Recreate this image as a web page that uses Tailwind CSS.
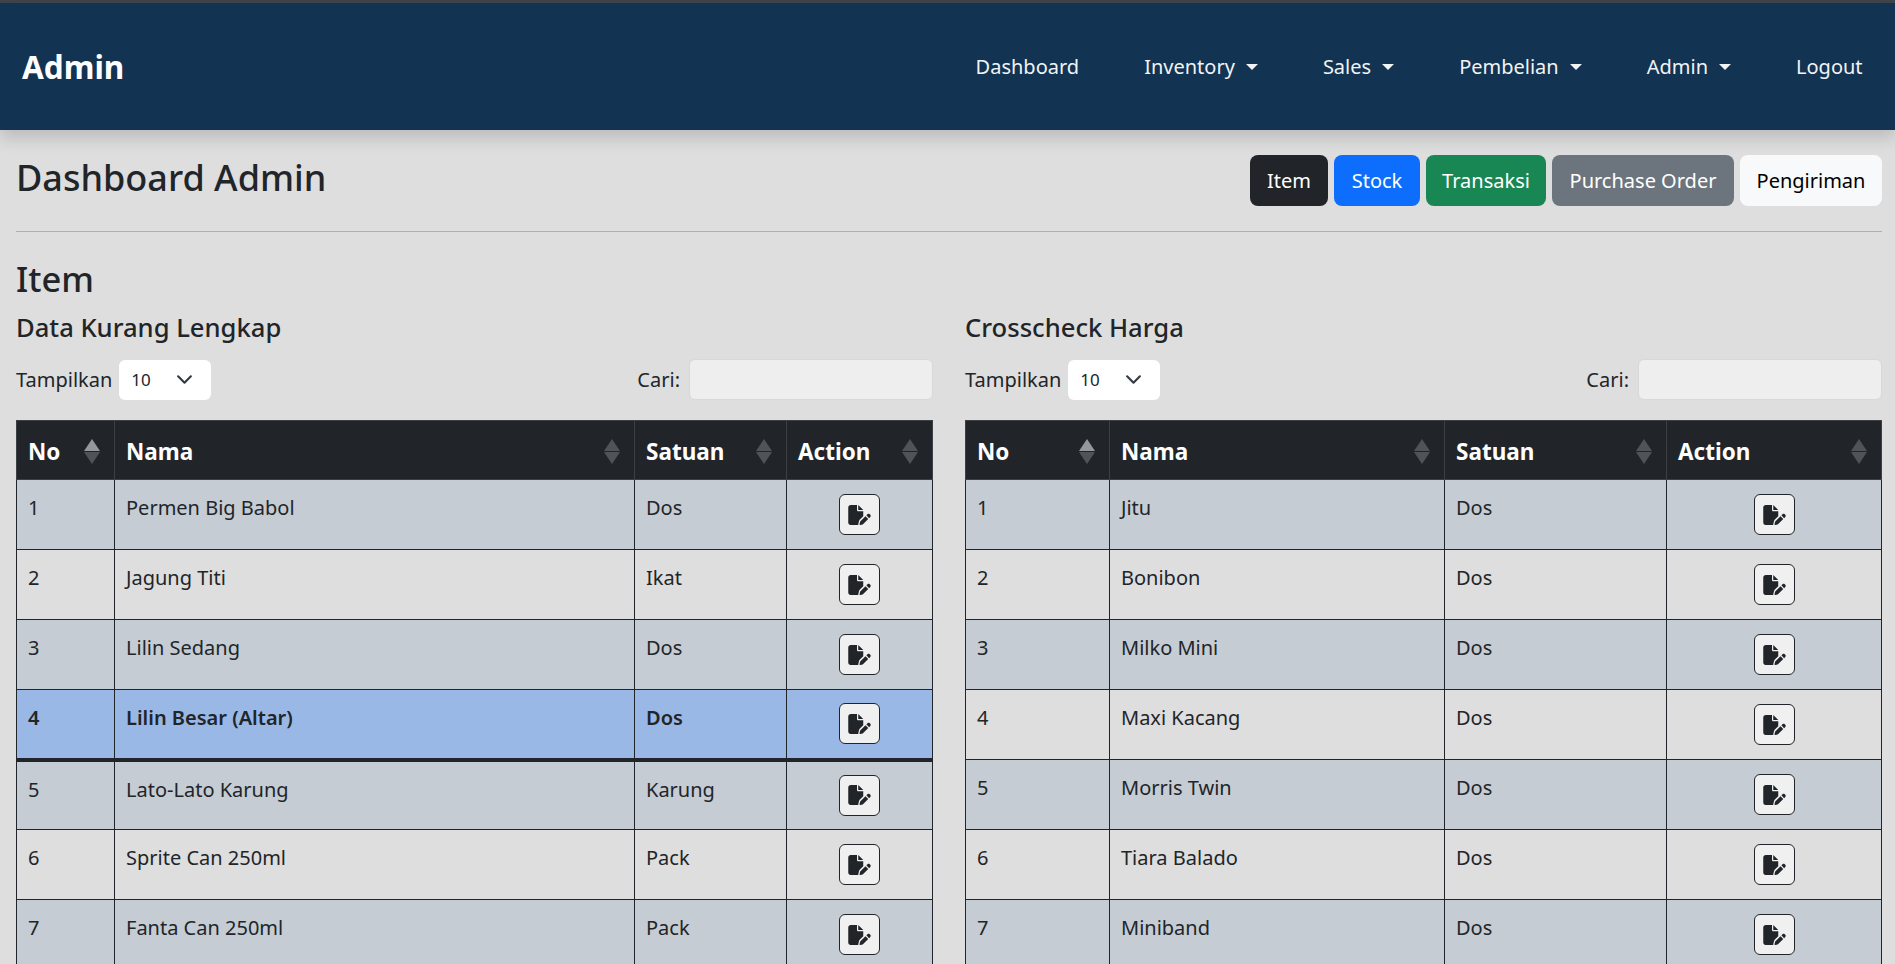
<!DOCTYPE html>
<html lang="en">
<head>
    <meta charset="UTF-8">
    <title>Dashboard Admin</title>
    <script src="https://cdn.jsdelivr.net/npm/@tailwindcss/browser@4"></script>
</head>
<body class="h-screen overflow-hidden bg-[#dedede] text-[#212529] font-['Noto_Sans',sans-serif] text-[20px]">
    <div class="h-[3px] bg-[#3f454b]"></div>
    <!-- Navbar -->
    <nav class="relative z-10 h-[127px] bg-[#123352] text-[#f1f3f5] flex items-center justify-between pl-[22px] pr-[29px] shadow-[0_8px_16px_rgba(0,0,0,0.16)]">
        <a class="text-[31.5px] font-bold text-white">Admin</a>
        <div class="flex items-center gap-[65px]">
            <a>Dashboard</a>
            <a class="flex items-center gap-[11px]">Inventory <i class="w-0 h-0 border-x-[6px] border-x-transparent border-t-[6px] border-t-[#f1f3f5]"></i></a>
            <a class="flex items-center gap-[11px]">Sales <i class="w-0 h-0 border-x-[6px] border-x-transparent border-t-[6px] border-t-[#f1f3f5]"></i></a>
            <a class="flex items-center gap-[11px]">Pembelian <i class="w-0 h-0 border-x-[6px] border-x-transparent border-t-[6px] border-t-[#f1f3f5]"></i></a>
            <a class="flex items-center gap-[11px]">Admin <i class="w-0 h-0 border-x-[6px] border-x-transparent border-t-[6px] border-t-[#f1f3f5]"></i></a>
            <a class="w-[70px]">Logout</a>
        </div>
    </nav>

    <main class="pl-4 pr-[13px]">
        <div class="flex justify-between items-start pt-[24px]">
            <h1 class="text-[36px] leading-[48px] font-medium">Dashboard Admin</h1>
            <div class="flex gap-[6px] mt-[1px]">
                <button class="h-[51px] w-[78px] rounded-[8px] bg-[#212529] text-white">Item</button>
                <button class="h-[51px] w-[86px] rounded-[8px] bg-[#0d6efd] text-white">Stock</button>
                <button class="h-[51px] w-[120px] rounded-[8px] bg-[#198754] text-white">Transaksi</button>
                <button class="h-[51px] w-[182px] rounded-[8px] bg-[#6c757d] text-white">Purchase Order</button>
                <button class="h-[51px] w-[142px] rounded-[8px] bg-[#f8f9fa] text-black">Pengiriman</button>
            </div>
        </div>
        <hr class="mt-[25px] border-[#b0b0b0]">
        <h3 class="mt-[26px] text-[34.5px] leading-[42px] font-medium">Item</h3>

        <div class="grid grid-cols-2 gap-[32px] mt-[13px]">
            <!-- Data Kurang Lengkap -->
            <section>
                <h4 class="text-[25.6px] leading-[30px] font-medium">Data Kurang Lengkap</h4>
                <div class="flex justify-between mt-[16px] h-[41px] items-center">
                    <div class="flex items-center gap-[7px]">Tampilkan
                        <div class="w-[92px] h-[40px] rounded-[6px] bg-white flex items-center justify-between pl-[12px] pr-[18px] text-[17px]">10
                            <svg class="w-[17px] h-[17px]" viewBox="0 0 16 16" fill="none" stroke="#343a40" stroke-width="2" stroke-linecap="round" stroke-linejoin="round"><path d="M2 5l6 6 6-6"/></svg>
                        </div>
                    </div>
                    <div class="flex items-center gap-[9px]">Cari:
                        <div class="w-[244px] h-[41px] rounded-[6px] bg-[#eeeeee] border border-[#d8d8d8]"></div>
                    </div>
                </div>
                <table class="mt-[20px] w-full table-fixed border-collapse" id="tableKurang">
                    <colgroup><col class="w-[98px]"><col class="w-[520px]"><col class="w-[152px]"><col></colgroup>
                </table>
            </section>

            <!-- Crosscheck Harga -->
            <section>
                <h4 class="text-[25.6px] leading-[30px] font-medium">Crosscheck Harga</h4>
                <div class="flex justify-between mt-[16px] h-[41px] items-center">
                    <div class="flex items-center gap-[7px]">Tampilkan
                        <div class="w-[92px] h-[40px] rounded-[6px] bg-white flex items-center justify-between pl-[12px] pr-[18px] text-[17px]">10
                            <svg class="w-[17px] h-[17px]" viewBox="0 0 16 16" fill="none" stroke="#343a40" stroke-width="2" stroke-linecap="round" stroke-linejoin="round"><path d="M2 5l6 6 6-6"/></svg>
                        </div>
                    </div>
                    <div class="flex items-center gap-[9px]">Cari:
                        <div class="w-[244px] h-[41px] rounded-[6px] bg-[#eeeeee] border border-[#d8d8d8]"></div>
                    </div>
                </div>
                <table class="mt-[20px] w-full table-fixed border-collapse" id="tableHarga">
                    <colgroup><col class="w-[144px]"><col class="w-[335px]"><col class="w-[222px]"><col></colgroup>
                </table>
            </section>
        </div>
    </main>

    <script>
        const kurang = [
            ["Permen Big Babol", "Dos"], ["Jagung Titi", "Ikat"], ["Lilin Sedang", "Dos"], ["Lilin Besar (Altar)", "Dos"],
            ["Lato-Lato Karung", "Karung"], ["Sprite Can 250ml", "Pack"], ["Fanta Can 250ml", "Pack"]
        ];
        const harga = [
            ["Jitu", "Dos"], ["Bonibon", "Dos"], ["Milko Mini", "Dos"], ["Maxi Kacang", "Dos"],
            ["Morris Twin", "Dos"], ["Tiara Balado", "Dos"], ["Miniband", "Dos"]
        ];

        function sortIcon(active) {
            const up = active ? "#94989c" : "#505458";
            return `<svg class="absolute right-[14px] top-[18px] w-[16px] h-[25px]" viewBox="0 0 16 25"><path d="M8 0l8 12H0z" fill="${up}"/><path d="M0 13h16L8 25z" fill="#505458"/></svg>`;
        }

        const editIcon = `<svg class="w-[23px] h-[20px]" viewBox="0 0 576 512" fill="#212529"><path d="M0 64C0 28.7 28.7 0 64 0H224V128c0 17.7 14.3 32 32 32H384V285.7l-86.8 86.8c-10.3 10.3-17.5 23.1-21 37.2l-18.7 74.9c-2.3 9.2-1.8 18.8 1.3 27.5H64c-35.3 0-64-28.7-64-64V64zm384 64H256V0L384 128zM549.8 235.7l14.4 14.4c15.6 15.6 15.6 40.9 0 56.6l-29.4 29.4-71-71 29.4-29.4c15.6-15.6 40.9-15.6 56.6 0zM311.9 417L441.1 287.8l71 71L382.9 487.9c-4.1 4.1-9.2 7-14.9 8.4l-60.1 15c-5.5 1.4-11.2-.2-15.2-4.2s-5.6-9.7-4.2-15.2l15-60.1c1.4-5.6 4.3-10.8 8.4-14.9z"/></svg>`;

        function fillTable(id, rows, highlight) {
            const head = ["No", "Nama", "Satuan", "Action"].map((h, i) =>
                `<th class="relative h-[59px] border border-[#3c4045] px-[11px] pt-[3px] text-left text-[22.5px] font-bold text-white">${h}${sortIcon(i === 0)}</th>`
            ).join("");
            const body = rows.map((r, i) => {
                const isHi = i === highlight;
                const bg = isHi ? "bg-[#9ab8e6] font-semibold" : (i % 2 === 0 ? "bg-[#c6ccd3]" : "bg-[#dedede]");
                const line = isHi ? "border-b-[4px]" : "border-b";
                return `<tr class="h-[70px] ${bg}">
                    <td class="border-x border-t ${line} border-[#212529] px-[11px] pt-[13px] align-top">${i + 1}</td>
                    <td class="border-x border-t ${line} border-[#212529] px-[11px] pt-[13px] align-top">${r[0]}</td>
                    <td class="border-x border-t ${line} border-[#212529] px-[11px] pt-[13px] align-top">${r[1]}</td>
                    <td class="border-x border-t ${line} border-[#212529] align-middle">
                        <button class="mx-auto flex w-[41px] h-[41px] items-center justify-center rounded-[6px] border border-[#212529] bg-[#f0f0f0]">${editIcon}</button>
                    </td>
                </tr>`;
            }).join("");
            document.getElementById(id).insertAdjacentHTML("beforeend",
                `<thead><tr class="bg-[#212529]">${head}</tr></thead><tbody>${body}</tbody>`);
        }

        fillTable("tableKurang", kurang, 3);
        fillTable("tableHarga", harga, -1);
    </script>
</body>
</html>
